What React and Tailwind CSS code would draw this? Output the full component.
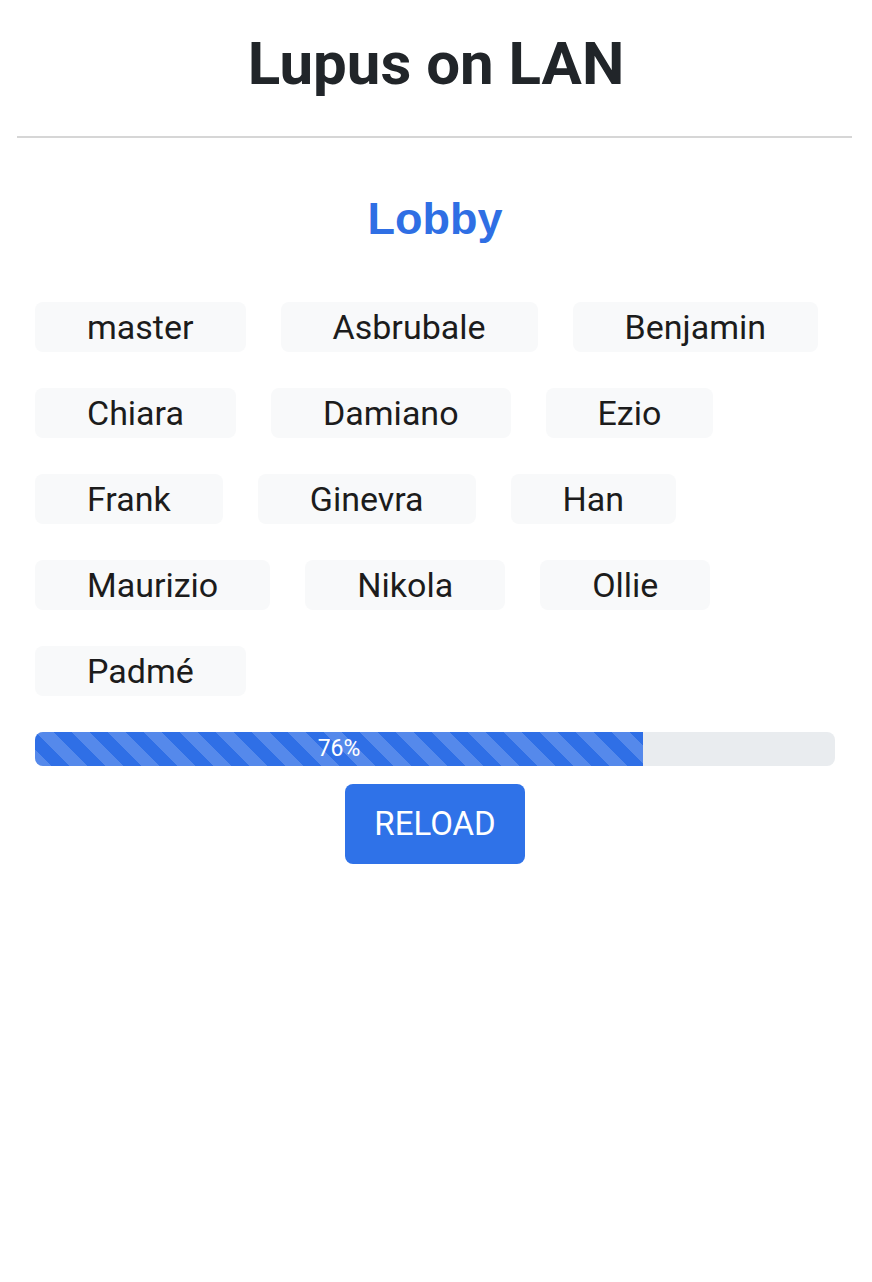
import React from 'react';

const players = [
  'master', 'Asbrubale', 'Benjamin', 'Chiara', 'Damiano', 'Ezio', 'Frank',
  'Ginevra', 'Han', 'Maurizio', 'Nikola', 'Ollie', 'Padmé',
];

export default function App() {
  const progress = 76;

  return (
    <div className="min-h-screen bg-white text-[#212529] font-['Roboto',sans-serif]">
      <h1 className="pt-[28px] text-center text-[60px] leading-[72px] font-bold">Lupus on LAN</h1>
      <hr className="mt-[36px] ml-[17px] mr-[20px] border-0 h-[2px] bg-[#d6d6d6]" />

      <div className="pl-[35px] pr-[37px]">
        <h2 className="mt-[54px] text-center text-[45px] leading-[54px] font-bold text-[#2f6fe4] font-['Liberation_Sans',Arial,sans-serif]">
          Lobby
        </h2>

        <div className="mt-[56px] flex flex-wrap gap-x-[35px] gap-y-[36px]">
          {players.map((name) => (
            <div
              key={name}
              className="bg-[#f8f9fa] rounded-[8px] px-[52px] text-[34px] leading-[50px] text-[#1c1c1c]"
            >
              {name}
            </div>
          ))}
        </div>

        {/* progress */}
        <div className="mt-[36px] h-[34px] rounded-[8px] bg-[#e9ecef] overflow-hidden flex">
          <div
            className="h-full flex items-center justify-center bg-[#2f6fe6] bg-[linear-gradient(45deg,rgba(255,255,255,.18)_25%,transparent_25%,transparent_50%,rgba(255,255,255,.18)_50%,rgba(255,255,255,.18)_75%,transparent_75%,transparent)] bg-[length:36px_36px] text-white text-[23px]"
            style={{ width: `${progress}%` }}
          >
            {progress}%
          </div>
        </div>

        <div className="mt-[18px] flex justify-center">
          <button className="bg-[#2f72e8] text-white rounded-[8px] px-[29px] py-[15px] text-[33px] leading-[50px]">
            RELOAD
          </button>
        </div>
      </div>
    </div>
  );
}
